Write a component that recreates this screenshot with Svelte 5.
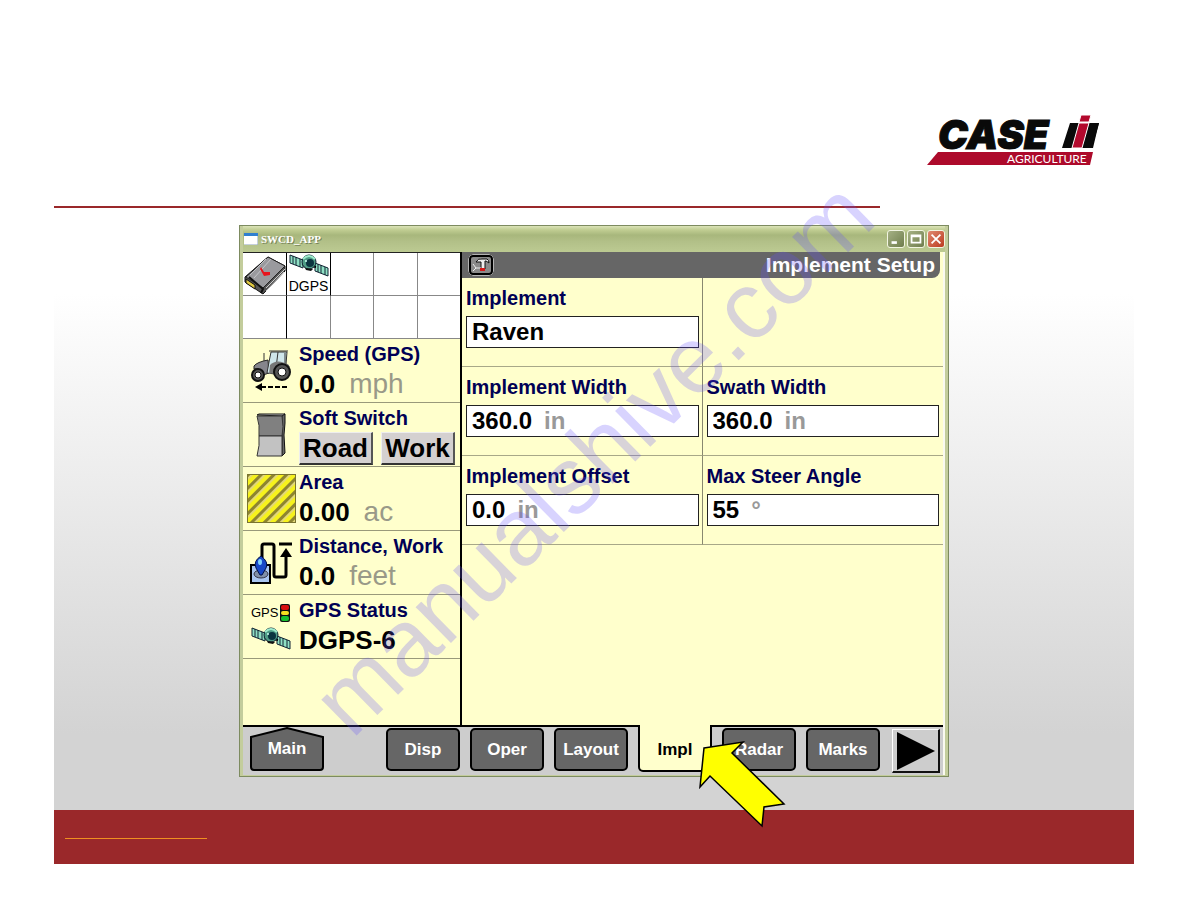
<script>
  let fields = [
    { id: 'implement', label: 'Implement', value: 'Raven', unit: '' },
    null,
    { id: 'width', label: 'Implement Width', value: '360.0', unit: 'in' },
    { id: 'swath', label: 'Swath Width', value: '360.0', unit: 'in' },
    { id: 'offset', label: 'Implement Offset', value: '0.0', unit: 'in' },
    { id: 'steer', label: 'Max Steer Angle', value: '55', unit: '°' }
  ];

  let readings = [
    { icon: 'tractor', label: 'Speed (GPS)', value: '0.0', unit: 'mph' },
    { icon: 'switch', label: 'Soft Switch', buttons: ['Road', 'Work'] },
    { icon: 'area', label: 'Area', value: '0.00', unit: 'ac' },
    { icon: 'distance', label: 'Distance, Work', value: '0.0', unit: 'feet' },
    { icon: 'gps', label: 'GPS Status', value: 'DGPS-6', unit: '' }
  ];

  const tabs = ['Disp', 'Oper', 'Layout', 'Impl', 'Radar', 'Marks'];
  let active = 'Impl';
</script>

{#snippet satellite()}
  <svg class="satellite" viewBox="0 0 40 24" aria-hidden="true">
    <path d="M1 2 L14 7 V15 L1 10 Z M26 10 L39 15 V23 L26 18 Z" fill="#8fe0c4" stroke="#123" />
    <path d="M4 3 V11 M7 4 V12 M11 6 V14 M29 11 V19 M32 12 V20 M36 14 V22" stroke="#123" stroke-width="1" />
    <path d="M13 11 L27 14" stroke="#000" stroke-width="2" />
    <circle cx="20" cy="9" r="7" fill="#4f9c86" stroke="#123" />
    <path d="M14 6 Q20 0 26 6" fill="none" stroke="#9deacb" stroke-width="2" />
    <circle cx="21" cy="10" r="4" fill="#0b3440" />
    <path d="M16 15 L24 16 L22 18 L17 17 Z" fill="#111" />
    <circle cx="17" cy="8" r="1" fill="#c8fff0" />
  </svg>
{/snippet}

<div class="slide">
  <header>
    <svg class="logo" viewBox="0 0 172 50" role="img" aria-label="Case IH Agriculture">
      <path d="M11 37 H166 L163 50 H0 Z" fill="#ad0a2b" />
      <text class="brand" x="11" y="34">CASE</text>
      <text class="division" x="80" y="48">AGRICULTURE</text>
      <path d="M143 8 H154 L151 17 H165 L168 8 H172 L170 16 L166 33 H155 L158 24 H149 L146 33 H135 Z" fill="#0a0a0a" />
      <path d="M162 8 H172 L165 33 H155 Z" fill="#0a0a0a" />
      <path d="M154 0 H164 L162 7 H152 Z M152 8 H162 L155 33 H145 Z" fill="#b3092d" stroke="#fff" stroke-width="1" />
    </svg>
    <div class="rule"></div>
  </header>

  <div class="window">
    <div class="titlebar">
      <svg class="app-icon" viewBox="0 0 14 12" aria-hidden="true">
        <rect width="14" height="12" fill="#fff" />
        <rect width="14" height="3" fill="#2f7fd0" />
        <path d="M0 12 H14 V3" fill="none" stroke="#8aa0b8" />
      </svg>
      <span class="title">SWCD_APP</span>
      <button class="win-btn" aria-label="Minimize">
        <svg viewBox="0 0 18 18"><path d="M4 13 H10" stroke="#fff" stroke-width="3" /></svg>
      </button>
      <button class="win-btn" aria-label="Maximize">
        <svg viewBox="0 0 18 18"><path d="M4 5 H14 V13 H4 Z M4 6 H14" fill="none" stroke="#fff" stroke-width="2" /></svg>
      </button>
      <button class="win-btn close" aria-label="Close">
        <svg viewBox="0 0 18 18"><path d="M4 4 L14 14 M14 4 L4 14" stroke="#fff" stroke-width="2" /></svg>
      </button>
    </div>

    <div class="client">
      <div class="panels">
        <aside>
          <div class="status-grid">
            <div class="cell">
              <svg viewBox="0 0 42 42" aria-hidden="true">
                <path d="M24 4 L41 13 V18 L19 41 L1 29 V24 Z" fill="#555" stroke="#111" />
                <path d="M24 4 L41 13 L19 35 L2 24 Z" fill="#9a9a9e" stroke="#222" />
                <path d="M22 6 L6 22 M27 6 L10 25" stroke="#c4c4c8" />
                <path d="M2 26 L11 32 V36 L2 30 Z" fill="#e0c840" stroke="#111" />
                <path d="M5 24 L19 36 L17 40" fill="none" stroke="#111" stroke-width="2" />
                <path d="M22 35 L41 16 M22 38 L40 19" stroke="#ccc" />
                <path d="M17 14 L20 19 L26 19 V22 L20 23 L16 16 Z" fill="#e8141c" />
              </svg>
            </div>
            <div class="cell dark">
              {@render satellite()}
              <span>DGPS</span>
            </div>
            {#each Array(8) as _, i}
              <div class="cell" class:dark={i === 0 || i === 4}></div>
            {/each}
          </div>

          {#each readings as r}
            <section class="reading">
              <div class="icon">
                {#if r.icon === 'tractor'}
                  <svg viewBox="0 0 40 42" width="40" height="42" aria-hidden="true">
                    <path d="M3 16 Q6 12 17 10 L18 23 L12 25 Q8 17 3 19 Z" fill="#85858c" stroke="#222" />
                    <path d="M20 2 H36 L35 14 L38 16 V20 L24 24 L16 23 L18 12 Z" fill="#cfe6ea" stroke="#333" />
                    <path d="M18 1 H37 M27 2 L25 18 M34 3 V14 M13 3 V11" stroke="#333" fill="none" />
                    <path d="M19 15 Q26 8 38 15 L36 20 L18 24 Z" fill="#777" />
                    <circle cx="31" cy="22" r="8" fill="#555" stroke="#111" stroke-width="2" />
                    <circle cx="31" cy="22" r="4" fill="#fff" stroke="#111" />
                    <circle cx="7" cy="25" r="6" fill="#555" stroke="#111" stroke-width="2" />
                    <circle cx="7" cy="25" r="3" fill="#fff" stroke="#111" />
                    <path d="M4 37 L11 33 V41 Z" fill="#000" />
                    <path d="M10 37 H36" stroke="#000" stroke-width="2" stroke-dasharray="5 2" />
                  </svg>
                {:else if r.icon === 'switch'}
                  <svg viewBox="0 0 30 44" width="30" height="44" aria-hidden="true">
                    <path d="M26 2 L29 1 V10 L28 22 L29 40 L26 43 Z" fill="#666" stroke="#111" />
                    <path d="M1 2 L3 1 H29 L26 3 Z" fill="#ccc" stroke="#111" />
                    <path d="M1 3 H26 Q28 14 26 23 H3 Q4 12 1 3 Z" fill="#808080" stroke="#333" />
                    <path d="M3 23 H26 V43 H1 Q4 32 3 23 Z" fill="#c2c2c2" stroke="#333" />
                  </svg>
                {:else if r.icon === 'area'}
                  <svg viewBox="0 0 49 49" width="49" height="49" aria-hidden="true">
                    <defs>
                      <pattern id="hatch" width="9" height="9" patternUnits="userSpaceOnUse" patternTransform="rotate(45)">
                        <rect width="9" height="9" fill="#f6f21c" />
                        <rect width="3" height="9" fill="#8d8430" />
                        <rect x="3" width="2" height="9" fill="#e2d878" />
                      </pattern>
                    </defs>
                    <rect x="0" y="0" width="49" height="49" fill="url(#hatch)" stroke="#7a7430" stroke-width="2" />
                  </svg>
                {:else if r.icon === 'distance'}
                  <svg viewBox="0 0 42 42" width="42" height="42" aria-hidden="true">
                    <path d="M1 23 H20 V41 H1 Z" fill="#a9c6f0" stroke="#000" stroke-width="2" />
                    <ellipse cx="11" cy="32" rx="7" ry="4" fill="#8090a8" stroke="#334" />
                    <path d="M12 16 V4 Q12 2 14 2 H22 Q24 2 24 4 V33 Q24 35 26 35 H34 Q36 35 36 33 V10" fill="none" stroke="#000" stroke-width="3" />
                    <path d="M30 15 L36 6 L42 15 Z" fill="#000" />
                    <path d="M29 2 H42" stroke="#000" stroke-width="3" />
                    <path d="M11 14 Q19 20 16 26 L12 33 H10 L6 26 Q3 19 11 14 Z" fill="#1748c8" stroke="#001048" />
                    <ellipse cx="10" cy="20" rx="2" ry="3" fill="#7fd0ff" />
                  </svg>
                {:else}
                  <div class="gps">
                    <div class="gps-top">
                      <span>GPS</span>
                      <svg viewBox="0 0 10 18" width="10" height="18" aria-hidden="true">
                        <rect width="10" height="18" rx="2" fill="#111" />
                        <rect x="1" y="1" width="8" height="5" rx="2" fill="#d81010" />
                        <rect x="1" y="7" width="8" height="4" rx="2" fill="#f6e020" />
                        <rect x="1" y="12" width="8" height="5" rx="2" fill="#18c030" />
                      </svg>
                    </div>
                    {@render satellite()}
                  </div>
                {/if}
              </div>
              <div class="info">
                <h3>{r.label}</h3>
                {#if r.buttons}
                  <div class="switches">
                    {#each r.buttons as b}
                      <button>{b}</button>
                    {/each}
                  </div>
                {:else}
                  <p><b>{r.value}</b><span>{r.unit}</span></p>
                {/if}
              </div>
            </section>
          {/each}
        </aside>

        <main>
          <div class="heading">
            <svg viewBox="0 0 26 22" aria-hidden="true">
              <rect x="1" y="1" width="24" height="20" rx="4" fill="#777" stroke="#fff" />
              <rect x="2" y="2" width="22" height="18" rx="3" fill="#8a8a8a" stroke="#000" stroke-width="2" />
              <path d="M8 8 Q10 4 14 5 H19 Q21 6 21 9 L18 7 H17 V15 H13 V8 Z" fill="#eee" stroke="#111" />
              <path d="M5 10 L8 14 L5 17 M8 14 H13" fill="none" stroke="#eee" />
              <rect x="12" y="14" width="5" height="3" fill="#d41818" />
            </svg>
            <h1>Implement Setup</h1>
          </div>
          <div class="fields">
            {#each fields as f}
              <div class="field">
                {#if f}
                  <label for={f.id}>{f.label}</label>
                  <div class="box">
                    <input id={f.id} type="text" bind:value={f.value} />
                    {#if f.unit}<span>{f.unit}</span>{/if}
                  </div>
                {/if}
              </div>
            {/each}
          </div>
        </main>
      </div>

      <nav>
        <button class="home">
          <svg viewBox="0 0 74 44" aria-hidden="true">
            <path d="M1 10 L37 1 L73 10 V40 Q73 43 70 43 H4 Q1 43 1 40 Z" fill="#666" stroke="#000" stroke-width="2" />
          </svg>
          <span>Main</span>
        </button>
        {#each tabs as tab}
          <button class="tab" class:active={tab === active} on:click={() => (active = tab)}>{tab}</button>
        {/each}
        <button class="next" aria-label="Next">
          <svg viewBox="0 0 38 38" aria-hidden="true"><path d="M0 0 L38 19 L0 38 Z" /></svg>
        </button>
      </nav>
    </div>

    <svg class="overlay" viewBox="0 0 710 552" aria-hidden="true">
      <text class="watermark" transform="translate(113 515) rotate(-44.5)">manualshive.com</text>
      <path
        d="M465 523 L504 517 L493 528 L545 579 L525 582 L523 601 L471 551 L461 562 Z"
        fill="#ff0" stroke="#000" stroke-width="1.5" />
    </svg>
  </div>

  <footer><div class="line"></div></footer>
</div>

<style>
  :global(body) {
    margin: 0;
    background: #fff;
    font-family: "Liberation Sans", Arial, sans-serif;
  }

  .slide {
    margin: 54px;
    background: linear-gradient(#fff 240px, #d3d3d3 680px);
  }

  header {
    padding: 61px 0 17px;
  }

  .logo {
    display: block;
    width: 172px;
    height: 50px;
    margin: 0 35px 41px auto;
    overflow: visible;
  }

  .brand {
    font: italic 900 40px Inter, "DejaVu Sans", sans-serif;
    fill: #0a0a0a;
    stroke: #0a0a0a;
    stroke-width: 1px;
  }

  .division {
    font: 12px Lato, sans-serif;
    fill: #fff;
  }

  .rule {
    width: 76.5%;
    height: 2px;
    background: #9a282a;
  }

  .window {
    position: relative;
    box-sizing: border-box;
    max-width: 710px;
    margin: 0 auto 33px;
    padding: 0 3px 1px;
    border: 1px solid #7d8b60;
    background: #c3cd9c;
  }

  .titlebar {
    display: flex;
    align-items: center;
    gap: 2px;
    height: 26px;
    background: linear-gradient(#dbe3b8, #c0cd92 15%, #a8b77c 35%, #b2c088 60%, #bcca92);
  }

  .app-icon {
    width: 14px;
    height: 12px;
    margin: 0 1px;
  }

  .title {
    margin-right: auto;
    font: bold 11px "Liberation Serif", serif;
    color: #fff;
    text-shadow: 1px 1px 0 #76845a;
  }

  .win-btn {
    width: 18px;
    height: 18px;
    padding: 0;
    border: 1px solid #f2f5e2;
    border-radius: 3px;
    background: linear-gradient(135deg, #a5b184, #6f7d4c);
  }

  .win-btn svg {
    display: block;
    width: 16px;
    height: 16px;
  }

  .win-btn.close {
    background: linear-gradient(135deg, #e08a70, #bc3c20);
  }

  .client {
    border-right: 2px solid #fafaf0;
    background: #cdcdcd;
  }

  .panels {
    display: grid;
    grid-template-columns: 217px 1fr;
    min-height: 473px;
    background: #ffffcc;
    border-bottom: 2px solid #000;
  }

  .status-grid {
    display: grid;
    grid-template-columns: repeat(5, 1fr);
    grid-auto-rows: 43px;
    background: #fff;
    border-top: 1px solid #222;
  }

  .cell {
    display: flex;
    flex-direction: column;
    align-items: center;
    border-left: 1px solid #888;
    border-bottom: 1px solid #888;
    overflow: hidden;
    font-size: 14px;
    line-height: 18px;
  }

  .cell:nth-child(5n + 1) {
    border-left: none;
  }

  .cell.dark {
    border-left-color: #000;
  }

  .satellite {
    width: 40px;
    height: 24px;
    flex: none;
  }

  .reading {
    display: grid;
    grid-template-columns: 56px 1fr;
    box-sizing: border-box;
    height: 64px;
    border-bottom: 1px solid #99997a;
  }

  .icon {
    display: flex;
    align-items: center;
    justify-content: center;
  }

  .gps-top {
    display: flex;
    align-items: center;
    gap: 2px;
    font-size: 13px;
  }

  .gps .satellite {
    display: block;
    margin-top: 4px;
  }

  h3 {
    margin: 0;
    padding-top: 3px;
    font-size: 20px;
    line-height: 24px;
    color: #000055;
    white-space: nowrap;
  }

  .info p {
    margin: 0;
    font-size: 26px;
    line-height: 36px;
  }

  .info p span {
    margin-left: 14px;
    font-size: 28px;
    color: #999988;
  }

  .switches {
    display: flex;
    gap: 8px;
    margin-top: 2px;
  }

  .switches button {
    width: 74px;
    height: 33px;
    padding: 0;
    border: 1px solid #eee;
    border-right: 2px solid #555;
    border-bottom: 2px solid #333;
    background: #d4d0d0;
    font: bold 26px "Liberation Sans", Arial, sans-serif;
    line-height: 30px;
    color: #000;
  }

  main {
    border-left: 2px solid #000;
  }

  .heading {
    display: flex;
    align-items: center;
    justify-content: space-between;
    height: 26px;
    margin-right: 3px;
    padding: 0 5px 0 6px;
    border-radius: 0 0 8px 0;
    background: #666;
    color: #fff;
  }

  .heading svg {
    width: 26px;
    height: 22px;
  }

  h1 {
    margin: 0;
    font-size: 21px;
    line-height: 26px;
  }

  .fields {
    display: grid;
    grid-template-columns: 1fr 1fr;
  }

  .field {
    box-sizing: border-box;
    height: 89px;
    padding: 8px 4px 0;
    border-bottom: 1px solid #a8a888;
  }

  .field:nth-child(odd) {
    padding-right: 3px;
    border-right: 1px solid #888870;
  }

  label {
    display: block;
    font-size: 20px;
    font-weight: bold;
    line-height: 24px;
    color: #000055;
  }

  .box {
    display: flex;
    align-items: center;
    gap: 12px;
    box-sizing: border-box;
    height: 32px;
    margin-top: 6px;
    padding: 0 5px;
    border: 1px solid #222;
    background: #fff;
    font-size: 24px;
    font-weight: bold;
    color: #999;
  }

  .box input {
    field-sizing: content;
    min-width: 0;
    padding: 0;
    border: none;
    outline: none;
    background: none;
    font: inherit;
    color: #000;
  }

  nav {
    display: flex;
    align-items: flex-start;
    gap: 10px;
    height: 48px;
    padding: 0 3px 0 7px;
  }

  nav button {
    flex: none;
    font: bold 17px "Liberation Sans", Arial, sans-serif;
    color: #fff;
    padding: 0;
  }

  .home {
    position: relative;
    width: 74px;
    height: 44px;
    margin-right: auto;
    border: none;
    background: none;
  }

  .home svg {
    position: absolute;
    inset: 0;
    width: 74px;
    height: 44px;
  }

  .home span {
    position: relative;
  }

  .tab {
    width: 74px;
    height: 43px;
    margin-top: 1px;
    border: 2px solid #000;
    border-radius: 5px;
    background: #666;
  }

  .tab.active {
    height: 47px;
    margin-top: -2px;
    padding-top: 4px;
    border-top: none;
    border-radius: 0 0 5px 5px;
    background: #ffffcc;
    color: #000;
  }

  .next {
    display: flex;
    align-items: center;
    justify-content: center;
    width: 48px;
    height: 44px;
    margin: 2px 0 0 2px;
    border: 1px solid #fff;
    border-right: 2px solid #111;
    border-bottom: 2px solid #111;
    background: #cdcdcd;
  }

  .next svg {
    width: 38px;
    height: 38px;
  }

  .overlay {
    position: absolute;
    top: -1px;
    left: -1px;
    width: 710px;
    height: 552px;
    overflow: visible;
    pointer-events: none;
  }

  .watermark {
    font: 95px "Liberation Sans", Arial, sans-serif;
    fill: rgba(100, 80, 250, 0.25);
  }

  footer {
    height: 54px;
    background: #9a282a;
  }

  .line {
    width: 142px;
    margin-left: 11px;
    padding-top: 28px;
    border-bottom: 1px solid #f09020;
  }
</style>
